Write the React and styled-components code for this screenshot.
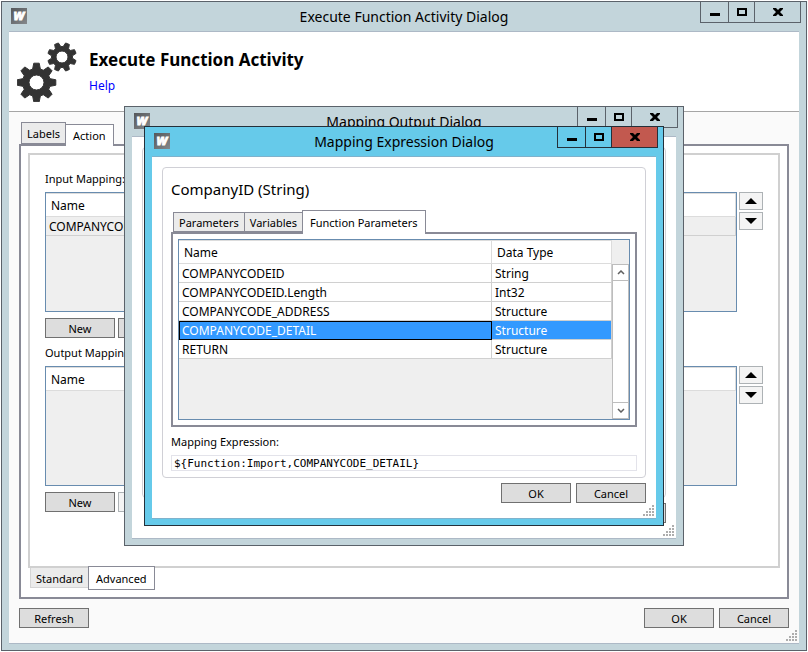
import React from "react";
import styled, { createGlobalStyle, css } from "styled-components";

const GlobalStyle = createGlobalStyle`
  *, *::before, *::after { box-sizing: border-box; }
  body {
    margin: 0;
    background: #fff;
    color: #000;
    font: 12px/16px "Noto Sans", "Open Sans", sans-serif;
  }
  button, input { font: inherit; color: inherit; margin: 0; }
`;

const Desktop = styled.div`
  position: relative;
  display: flex;
  min-height: 100vh;
  padding: 1px;
`;

const Overlay = styled.div`
  position: absolute;
  inset: 0;
  display: grid;
  place-items: center;
`;

const WindowFrame = styled.section`
  display: flex;
  flex-direction: column;
  width: ${(p) => p.$width || "100%"};
  max-width: 100%;
  border: 1px solid ${(p) => (p.$active ? "#24303a" : "#5b626a")};
  background: ${(p) => (p.$active ? "#66caea" : "#c3d5db")};
`;

const TitleBar = styled.header`
  display: grid;
  grid-template-columns: 1fr auto 1fr;
  align-items: start;
  height: 29px;
  padding: 0 5px;
`;

const TitleIcon = styled.svg`
  display: block;
  width: 16px;
  height: 16px;
  margin: 6px 0 0 4px;
  overflow: visible;
`;

const Title = styled.h2`
  margin: 0;
  font-size: 14px;
  font-weight: 400;
  line-height: 29px;
  white-space: nowrap;
`;

const Controls = styled.div`
  display: flex;
  justify-self: end;
`;

const ControlButton = styled.button`
  display: grid;
  place-items: center;
  width: ${(p) => p.$width};
  height: 21px;
  padding: 0;
  border: solid ${(p) => (p.$active ? "#24303a" : "#5b626a")};
  border-width: 0 ${(p) => (p.$close ? "1px" : "0")} 1px 1px;
  background: ${(p) => (p.$active && p.$close ? "#c2594f" : "transparent")};
`;

const Client = styled.div`
  display: flex;
  flex: 1;
  flex-direction: column;
  margin: 0 7px 6px;
  border: solid ${(p) => (p.$active ? "#7fb2cc" : "#adb9c6")};
  border-width: 1px 0;
  background: ${(p) => p.$background || "#fff"};
`;

const Banner = styled.div`
  display: flex;
  gap: 12px;
  height: 80px;
  padding: 10px 8px;
  border-bottom: 1px solid #a5a5a5;
  background: #fff;
`;

const BannerText = styled.div`
  padding-top: 6px;
`;

const BannerTitle = styled.h1`
  margin: 0 0 6px;
  font-size: 17px;
  font-weight: 700;
  line-height: 24px;
`;

const HelpLink = styled.a`
  display: block;
  width: max-content;
  color: #0000ff;
  text-decoration: none;
`;

const Body = styled.div`
  display: flex;
  flex: 1;
  flex-direction: column;
  padding: 10px 10px 15px;
`;

const TabStrip = styled.div`
  position: relative;
  display: flex;
  align-items: ${(p) => (p.$below ? "flex-start" : "flex-end")};
  height: 24px;
  margin: ${(p) => (p.$below ? "-2px 0 0" : "0 0 -2px")};
  padding-left: 2px;
`;

const Tab = styled.button`
  height: 20px;
  margin: 2px 0;
  padding: 0 5px;
  border: 1px solid #898a96;
  background: #ebebeb;
  font-size: 11px;
  line-height: 20px;
  white-space: nowrap;
  & + & { margin-left: -1px; }

  ${(p) => p.$raised && css`
    align-self: flex-start;
    height: 22px;
    margin: 0;
    line-height: 22px;
  `}
  ${(p) => p.$below && css`
    border-color: #d5d5d5;
    border-top: 0;
    line-height: 22px;
  `}
  ${(p) => p.$selected && css`
    position: relative;
    height: ${p.$short ? "22px" : "24px"};
    margin: 0;
    padding: 0 7px;
    border-color: #898a96;
    border-top: 1px solid #898a96;
    border-bottom-width: ${p.$below ? "1px" : "0"};
    background: #fff;
    line-height: ${p.$below ? "24px" : "22px"};
  `}
`;

const TabPanel = styled.div`
  display: flex;
  flex: 1;
  flex-direction: column;
  padding: ${(p) => p.$padding};
  border: 2px solid #898a96;
  background: #fff;
`;

const MappingBox = styled.div`
  flex: 1;
  padding: 9px 15px;
  border: 2px solid #d0d0d0;
  background: #fff;
`;

const Mapping = styled.section`
  padding-top: 7px;
`;

const FieldLabel = styled.label`
  display: block;
  margin-bottom: 5px;
  font-size: 11px;
`;

const MappingRow = styled.div`
  display: flex;
  gap: 2px;
`;

const OrderButtons = styled.div`
  display: flex;
  flex-direction: column;
  gap: 2px;
`;

const OrderButton = styled.button`
  display: grid;
  place-items: center;
  width: 24px;
  height: 18px;
  padding: 0;
  border: 1px solid #adb2b5;
  background: #f4f4f4;
`;

const GridFrame = styled.div`
  display: flex;
  flex: 1;
  min-height: ${(p) => p.$minHeight};
  border: 1px solid #688caf;
  background: #efefef;
`;

const GridArea = styled.div`
  flex: 1;
`;

const DataTable = styled.table`
  width: 100%;
  border-collapse: separate;
  border-spacing: 0;
  table-layout: fixed;
`;

const HeadCell = styled.th`
  width: ${(p) => p.$width || "auto"};
  height: 24px;
  padding: 2px 5px 0;
  border: solid #dcdcdc;
  border-width: 1px 1px 1px 0;
  background: #fff;
  font-weight: 400;
  text-align: left;
`;

const Cell = styled.td`
  height: 19px;
  padding: 2px 3px 0;
  border: solid #d0d0d0;
  border-width: 0 1px 1px 0;
  background: ${(p) => (p.$selected ? "#3399ff" : p.$muted ? "#efefef" : "#fff")};
  background-clip: padding-box;
  color: ${(p) => (p.$selected ? "#fff" : "#000")};
  outline: ${(p) => (p.$focused ? "1px solid #000" : "none")};
  outline-offset: -1px;
  line-height: 16px;
`;

const ScrollRail = styled.div`
  display: flex;
  flex-direction: column;
  justify-content: space-between;
  width: 17px;
  margin-top: 24px;
  border: solid #bdbdbd;
  border-width: 0 1px;
  background: #fff;
`;

const ScrollButton = styled.button`
  display: grid;
  place-items: center;
  height: 17px;
  padding: 0;
  border: solid #bdbdbd;
  border-width: 1px 0;
  background: #fff;
`;

const ButtonRow = styled.div`
  display: flex;
  gap: ${(p) => p.$gap || "5px"};
  margin-top: ${(p) => p.$top};
`;

const PushButton = styled.button`
  width: 70px;
  height: 20px;
  padding: 0;
  border: 1px solid #707070;
  background: #dddddd;
  font-size: 11px;
  line-height: 20px;
  ${(p) => p.$pushRight && css`margin-left: auto;`}
  &:disabled {
    border-color: #adb2b5;
    background: #f4f4f4;
  }
`;

const GroupBox = styled.div`
  min-height: ${(p) => p.$minHeight || "0"};
  padding: 11px 8px 6px;
  border: 1px solid #d0d0d6;
  border-radius: 4px;
`;

const Subject = styled.h3`
  margin: 0 0 11px;
  font-size: 15px;
  font-weight: 400;
  line-height: 20px;
`;

const ExpressionField = styled.div`
  padding-top: 7px;
`;

const ExpressionInput = styled.input`
  display: block;
  width: 100%;
  height: 16px;
  padding: 0 2px;
  border: 1px solid #e3e3ea;
  background: #fff;
  font: 11px/14px "DejaVu Sans Mono", monospace;
`;

const GripCorner = styled.div`
  display: flex;
  justify-content: flex-end;
  height: 13px;
  margin-top: -13px;
  padding-right: 2px;
`;

function AppIcon() {
  return (
    <TitleIcon viewBox="0 0 16 16" aria-hidden="true">
      <defs>
        <linearGradient id="tile" x1="0" y1="0" x2="1" y2="1">
          <stop offset="0" stopColor="#55585b" />
          <stop offset="1" stopColor="#85888b" />
        </linearGradient>
      </defs>
      <rect width="16" height="16" fill="url(#tile)" />
      <text x="8" y="12" textAnchor="middle" fontFamily="Noto Sans, sans-serif" fontSize="14" fontWeight="700" fontStyle="italic" fill="#fff" stroke="#fff" strokeWidth="0.8">w</text>
    </TitleIcon>
  );
}

function AppWindow({ title, active, width, background, children }) {
  return (
    <WindowFrame $active={active} $width={width} aria-label={title}>
      <TitleBar>
        <AppIcon />
        <Title>{title}</Title>
        <Controls>
          <ControlButton $active={active} $width="28px" aria-label="Minimize">
            <svg width="10" height="10"><path d="M0 6h10v3H0z" /></svg>
          </ControlButton>
          <ControlButton $active={active} $width="26px" aria-label="Maximize">
            <svg width="10" height="8"><path d="M1 1h8v6H1z" fill="none" stroke="#000" strokeWidth="2" /></svg>
          </ControlButton>
          <ControlButton $active={active} $close $width="47px" aria-label="Close">
            <svg width="10" height="8"><path d="M0 0h3l2 2 2-2h3v1L7 4l3 3v1H7L5 6 3 8H0V7l3-3-3-3z" /></svg>
          </ControlButton>
        </Controls>
      </TitleBar>
      <Client $active={active} $background={background}>{children}</Client>
    </WindowFrame>
  );
}

function Grip() {
  const dots = [];
  for (let row = 0; row < 4; row += 1) {
    for (let col = 3 - row; col < 4; col += 1) {
      dots.push(<rect key={`${row}-${col}`} x={col * 3} y={row * 3} width="2" height="2" />);
    }
  }
  return (
    <GripCorner>
      <svg width="11" height="11" fill="#adadad" aria-hidden="true">{dots}</svg>
    </GripCorner>
  );
}

function gearPath(cx, cy, outer, root, hole, turn) {
  const point = (radius, degrees) => {
    const a = (degrees * Math.PI) / 180;
    return `${(cx + radius * Math.cos(a)).toFixed(2)} ${(cy + radius * Math.sin(a)).toFixed(2)}`;
  };
  const points = [];
  for (let i = 0; i < 8; i += 1) {
    const a = i * 45 + turn;
    points.push(point(root, a - 16), point(outer, a - 8), point(outer, a + 8), point(root, a + 16));
  }
  return `M${points.join("L")}Z M${cx - hole} ${cy}a${hole} ${hole} 0 1 0 ${hole * 2} 0a${hole} ${hole} 0 1 0 ${-hole * 2} 0Z`;
}

function Gears() {
  return (
    <svg width="60" height="60" viewBox="0 0 60 60" fill="#333" stroke="#333" strokeLinejoin="round" fillRule="evenodd" aria-hidden="true">
      <path d={gearPath(19.5, 40.5, 19.5, 14, 7.5, 0)} />
      <path d={gearPath(45, 15, 14.5, 10.5, 6, 22.5)} />
    </svg>
  );
}

function MappingSection({ id, label, rows, secondDisabled }) {
  return (
    <Mapping>
      <FieldLabel as="div" id={id}>{label}</FieldLabel>
      <MappingRow>
        <GridFrame $minHeight="120px">
          <GridArea>
            <DataTable aria-labelledby={id}>
              <thead><tr><HeadCell>Name</HeadCell></tr></thead>
              <tbody>
                {rows.map((row) => <tr key={row}><Cell $muted>{row}</Cell></tr>)}
              </tbody>
            </DataTable>
          </GridArea>
        </GridFrame>
        <OrderButtons>
          <OrderButton aria-label="Move up">
            <svg width="12" height="6"><path d="M0 6L6 0l6 6z" /></svg>
          </OrderButton>
          <OrderButton aria-label="Move down">
            <svg width="12" height="6"><path d="M0 0l6 6 6-6z" /></svg>
          </OrderButton>
        </OrderButtons>
      </MappingRow>
      <ButtonRow $top="6px" $gap="3px">
        <PushButton>New</PushButton>
        <PushButton aria-label="Edit" disabled={secondDisabled} />
      </ButtonRow>
    </Mapping>
  );
}

const parameters = [
  ["COMPANYCODEID", "String"],
  ["COMPANYCODEID.Length", "Int32"],
  ["COMPANYCODE_ADDRESS", "Structure"],
  ["COMPANYCODE_DETAIL", "Structure"],
  ["RETURN", "Structure"],
];

function ParameterGrid() {
  return (
    <GridFrame $minHeight="181px">
      <GridArea>
        <DataTable aria-label="Function Parameters">
          <thead>
            <tr>
              <HeadCell>Name</HeadCell>
              <HeadCell $width="120px">Data Type</HeadCell>
            </tr>
          </thead>
          <tbody>
            {parameters.map(([name, type]) => {
              const selected = name === "COMPANYCODE_DETAIL";
              return (
                <tr key={name} aria-selected={selected}>
                  <Cell $selected={selected} $focused={selected}>{name}</Cell>
                  <Cell $selected={selected}>{type}</Cell>
                </tr>
              );
            })}
          </tbody>
        </DataTable>
      </GridArea>
      <ScrollRail>
        <ScrollButton aria-label="Scroll up">
          <svg width="8" height="5"><path d="M1 4l3-3 3 3" fill="none" stroke="#606060" strokeWidth="1.5" /></svg>
        </ScrollButton>
        <ScrollButton aria-label="Scroll down">
          <svg width="8" height="5"><path d="M1 1l3 3 3-3" fill="none" stroke="#606060" strokeWidth="1.5" /></svg>
        </ScrollButton>
      </ScrollRail>
    </GridFrame>
  );
}

export default function App() {
  return (
    <>
      <GlobalStyle />
      <Desktop>
        <AppWindow title="Execute Function Activity Dialog" background="#fafafa">
          <Banner>
            <Gears />
            <BannerText>
              <BannerTitle>Execute Function Activity</BannerTitle>
              <HelpLink href="#help">Help</HelpLink>
            </BannerText>
          </Banner>
          <Body>
            <TabStrip role="tablist">
              <Tab role="tab" $raised>Labels</Tab>
              <Tab role="tab" aria-selected="true" $selected $short>Action</Tab>
            </TabStrip>
            <TabPanel role="tabpanel" $padding="7px">
              <MappingBox>
                <MappingSection id="input-mapping" label="Input Mapping:" rows={["COMPANYCODEID"]} />
                <MappingSection id="output-mapping" label="Output Mapping:" rows={[]} secondDisabled />
              </MappingBox>
              <TabStrip role="tablist" $below>
                <Tab role="tab" $below>Standard</Tab>
                <Tab role="tab" aria-selected="true" $below $selected>Advanced</Tab>
              </TabStrip>
            </TabPanel>
            <ButtonRow $top="9px">
              <PushButton>Refresh</PushButton>
              <PushButton $pushRight>OK</PushButton>
              <PushButton>Cancel</PushButton>
            </ButtonRow>
          </Body>
          <Grip />
        </AppWindow>

        <Overlay>
          <AppWindow title="Mapping Output Dialog" width="560px">
            <Body>
              <GroupBox $minHeight="351px" />
              <ButtonRow $top="5px">
                <PushButton $pushRight aria-label="OK" />
                <PushButton aria-label="Cancel" />
              </ButtonRow>
            </Body>
            <Grip />
          </AppWindow>
        </Overlay>

        <Overlay>
          <AppWindow title="Mapping Expression Dialog" width="520px" active>
            <Body>
              <GroupBox>
                <Subject>CompanyID (String)</Subject>
                <TabStrip role="tablist">
                  <Tab role="tab">Parameters</Tab>
                  <Tab role="tab">Variables</Tab>
                  <Tab role="tab" aria-selected="true" $selected>Function Parameters</Tab>
                </TabStrip>
                <TabPanel role="tabpanel" $padding="5px">
                  <ParameterGrid />
                </TabPanel>
                <ExpressionField>
                  <FieldLabel htmlFor="expression">Mapping Expression:</FieldLabel>
                  <ExpressionInput id="expression" defaultValue="${Function:Import,COMPANYCODE_DETAIL}" />
                </ExpressionField>
              </GroupBox>
              <ButtonRow $top="5px">
                <PushButton $pushRight>OK</PushButton>
                <PushButton>Cancel</PushButton>
              </ButtonRow>
            </Body>
            <Grip />
          </AppWindow>
        </Overlay>
      </Desktop>
    </>
  );
}
